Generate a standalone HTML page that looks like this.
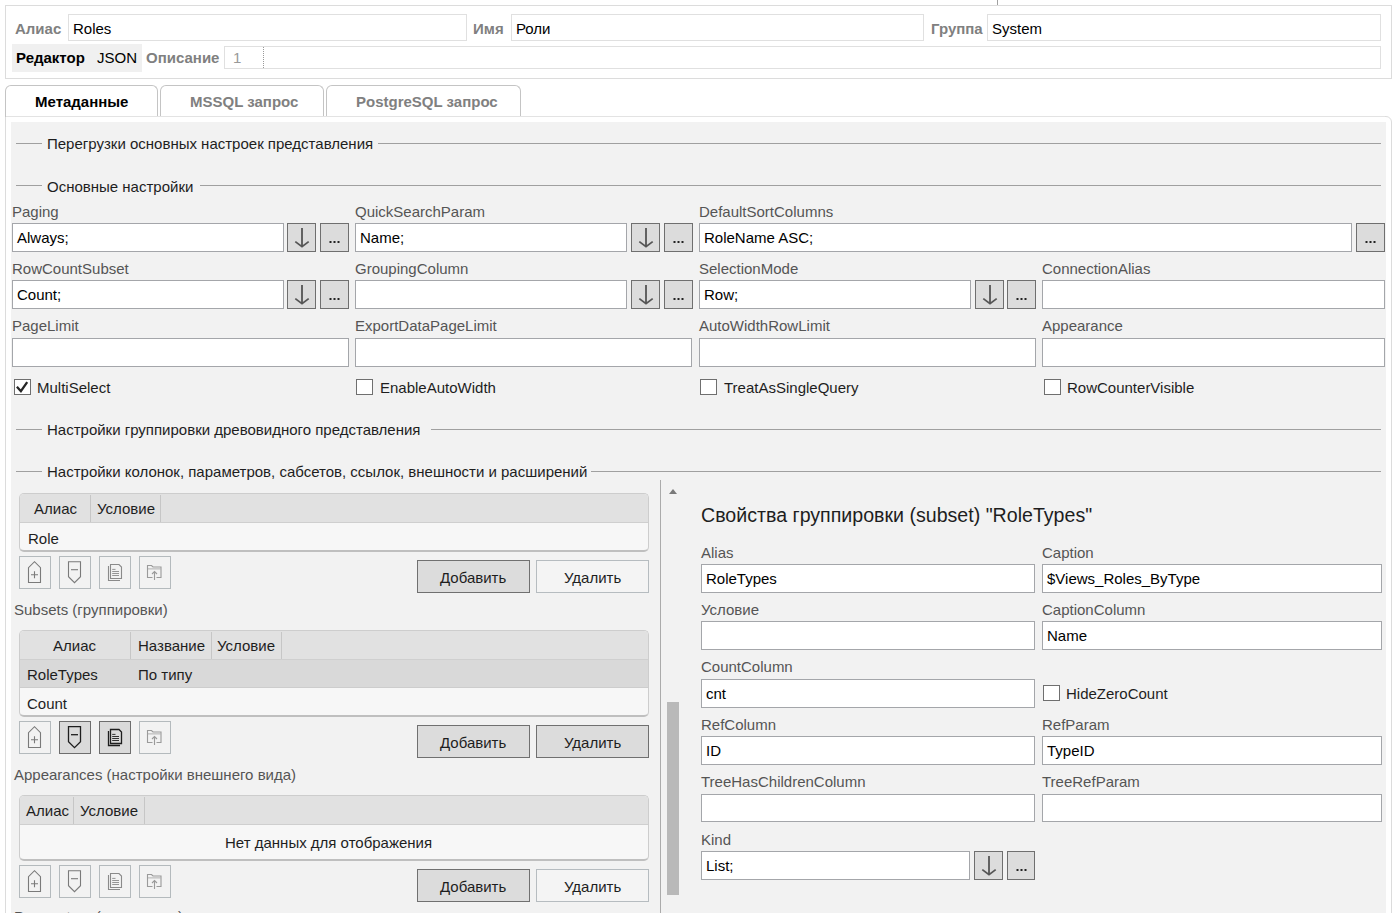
<!DOCTYPE html><html><head><meta charset="utf-8"><style>
html,body{margin:0;padding:0}
body{width:1392px;height:913px;position:relative;overflow:hidden;background:#fff;font-family:"Liberation Sans",sans-serif}
.t{position:absolute;white-space:nowrap}
.r{position:absolute;box-sizing:border-box}
svg.r{overflow:visible}
</style></head><body>
<div class="r" style="left:997px;top:0px;width:1px;height:6px;background:#a0a0a0;"></div>
<div class="r" style="left:5px;top:5px;width:1387px;height:74px;background:#fff;border:1px solid #dcdcdc;"></div>
<div class="t" style="left:15px;top:21px;font-size:15px;line-height:15px;color:#808080;font-weight:bold;">Алиас</div>
<div class="r" style="left:68px;top:14px;width:399px;height:27px;background:#fff;border:1px solid #e0e0e0;"></div>
<div class="t" style="left:73px;top:21px;font-size:15px;line-height:15px;color:#000;">Roles</div>
<div class="t" style="left:473px;top:21px;font-size:15px;line-height:15px;color:#808080;font-weight:bold;">Имя</div>
<div class="r" style="left:511px;top:14px;width:413px;height:27px;background:#fff;border:1px solid #e0e0e0;"></div>
<div class="t" style="left:516px;top:21px;font-size:15px;line-height:15px;color:#000;">Роли</div>
<div class="t" style="left:931px;top:21px;font-size:15px;line-height:15px;color:#808080;font-weight:bold;">Группа</div>
<div class="r" style="left:987px;top:14px;width:394px;height:27px;background:#fff;border:1px solid #e0e0e0;"></div>
<div class="t" style="left:992px;top:21px;font-size:15px;line-height:15px;color:#000;">System</div>
<div class="r" style="left:12px;top:44px;width:130px;height:28px;background:#f0f0f0;"></div>
<div class="t" style="left:16px;top:50px;font-size:15px;line-height:15px;color:#000;font-weight:bold;">Редактор</div>
<div class="t" style="left:97px;top:50px;font-size:15px;line-height:15px;color:#000;">JSON</div>
<div class="t" style="left:146px;top:50px;font-size:15px;line-height:15px;color:#808080;font-weight:bold;">Описание</div>
<div class="r" style="left:224px;top:46px;width:1157px;height:23px;background:#fff;border:1px solid #e0e0e0;"></div>
<div class="t" style="left:233px;top:50px;font-size:15px;line-height:15px;color:#999;">1</div>
<div class="r" style="left:263px;top:47px;width:1px;height:21px;border-left:1px dotted #999"></div>
<div class="r" style="left:5px;top:116px;width:1387px;height:885px;background:#fff;border:1px solid #dcdcdc;border-radius:0 6px 0 0;"></div>
<div class="r" style="left:5px;top:85px;width:153px;height:32px;background:#fff;border:1px solid #c4c4c4;border-radius:6px 6px 0 0;border-bottom:none;"></div>
<div class="r" style="left:160px;top:85px;width:164px;height:32px;background:#fff;border:1px solid #c4c4c4;border-radius:6px 6px 0 0;border-bottom:none;"></div>
<div class="r" style="left:326px;top:85px;width:195px;height:32px;background:#fff;border:1px solid #c4c4c4;border-radius:6px 6px 0 0;border-bottom:none;"></div>
<div class="r" style="left:6px;top:116px;width:1379px;height:1px;background:#e3e3e3;"></div>
<div class="t" style="left:35px;top:94px;font-size:15px;line-height:15px;color:#000;font-weight:bold;">Метаданные</div>
<div class="t" style="left:190px;top:94px;font-size:15px;line-height:15px;color:#808080;font-weight:bold;">MSSQL запрос</div>
<div class="t" style="left:356px;top:94px;font-size:15px;line-height:15px;color:#808080;font-weight:bold;">PostgreSQL запрос</div>
<div class="r" style="left:11px;top:122px;width:1375px;height:792px;background:#f2f2f2;"></div>
<div class="r" style="left:16px;top:143px;width:26px;height:1px;background:#a0a0a0;"></div>
<div class="t" style="left:47px;top:136px;font-size:15px;line-height:15px;color:#1e1e1e;">Перегрузки основных настроек представления</div>
<div class="r" style="left:378px;top:143px;width:1003px;height:1px;background:#a0a0a0;"></div>
<div class="r" style="left:16px;top:185px;width:26px;height:1px;background:#a0a0a0;"></div>
<div class="t" style="left:47px;top:179px;font-size:15px;line-height:15px;color:#1e1e1e;">Основные настройки</div>
<div class="r" style="left:200px;top:185px;width:1181px;height:1px;background:#a0a0a0;"></div>
<div class="t" style="left:12px;top:204px;font-size:15px;line-height:15px;color:#555;">Paging</div>
<div class="r" style="left:12px;top:223px;width:272px;height:29px;background:#fff;border:1px solid #a4a6aa;"></div>
<div class="t" style="left:17px;top:230px;font-size:15px;line-height:15px;color:#000;">Always;</div>
<div class="r" style="left:287px;top:223px;width:29px;height:29px;background:#dcdcdc;border:1px solid #6f6f6f;"></div>
<svg class="r" style="left:287px;top:223px" width="29" height="29"><path d="M15 5 V23.5 M8.3 18.6 L15 23.6 L21.7 18.6" stroke="#555" stroke-width="1.8" fill="none"/></svg>
<div class="r" style="left:320px;top:223px;width:29px;height:29px;background:#dcdcdc;border:1px solid #6f6f6f;"></div>
<svg class="r" style="left:320px;top:223px" width="29" height="29"><rect x="9.5" y="18" width="2" height="2" fill="#222"/><rect x="13.5" y="18" width="2" height="2" fill="#222"/><rect x="17.5" y="18" width="2" height="2" fill="#222"/></svg>
<div class="t" style="left:355px;top:204px;font-size:15px;line-height:15px;color:#555;">QuickSearchParam</div>
<div class="r" style="left:355px;top:223px;width:272px;height:29px;background:#fff;border:1px solid #a4a6aa;"></div>
<div class="t" style="left:360px;top:230px;font-size:15px;line-height:15px;color:#000;">Name;</div>
<div class="r" style="left:631px;top:223px;width:29px;height:29px;background:#dcdcdc;border:1px solid #6f6f6f;"></div>
<svg class="r" style="left:631px;top:223px" width="29" height="29"><path d="M15 5 V23.5 M8.3 18.6 L15 23.6 L21.7 18.6" stroke="#555" stroke-width="1.8" fill="none"/></svg>
<div class="r" style="left:664px;top:223px;width:29px;height:29px;background:#dcdcdc;border:1px solid #6f6f6f;"></div>
<svg class="r" style="left:664px;top:223px" width="29" height="29"><rect x="9.5" y="18" width="2" height="2" fill="#222"/><rect x="13.5" y="18" width="2" height="2" fill="#222"/><rect x="17.5" y="18" width="2" height="2" fill="#222"/></svg>
<div class="t" style="left:699px;top:204px;font-size:15px;line-height:15px;color:#555;">DefaultSortColumns</div>
<div class="r" style="left:699px;top:223px;width:653px;height:29px;background:#fff;border:1px solid #a4a6aa;"></div>
<div class="t" style="left:704px;top:230px;font-size:15px;line-height:15px;color:#000;">RoleName ASC;</div>
<div class="r" style="left:1356px;top:223px;width:29px;height:29px;background:#dcdcdc;border:1px solid #6f6f6f;"></div>
<svg class="r" style="left:1356px;top:223px" width="29" height="29"><rect x="9.5" y="18" width="2" height="2" fill="#222"/><rect x="13.5" y="18" width="2" height="2" fill="#222"/><rect x="17.5" y="18" width="2" height="2" fill="#222"/></svg>
<div class="t" style="left:12px;top:261px;font-size:15px;line-height:15px;color:#555;">RowCountSubset</div>
<div class="r" style="left:12px;top:280px;width:272px;height:29px;background:#fff;border:1px solid #a4a6aa;"></div>
<div class="t" style="left:17px;top:287px;font-size:15px;line-height:15px;color:#000;">Count;</div>
<div class="r" style="left:287px;top:280px;width:29px;height:29px;background:#dcdcdc;border:1px solid #6f6f6f;"></div>
<svg class="r" style="left:287px;top:280px" width="29" height="29"><path d="M15 5 V23.5 M8.3 18.6 L15 23.6 L21.7 18.6" stroke="#555" stroke-width="1.8" fill="none"/></svg>
<div class="r" style="left:320px;top:280px;width:29px;height:29px;background:#dcdcdc;border:1px solid #6f6f6f;"></div>
<svg class="r" style="left:320px;top:280px" width="29" height="29"><rect x="9.5" y="18" width="2" height="2" fill="#222"/><rect x="13.5" y="18" width="2" height="2" fill="#222"/><rect x="17.5" y="18" width="2" height="2" fill="#222"/></svg>
<div class="t" style="left:355px;top:261px;font-size:15px;line-height:15px;color:#555;">GroupingColumn</div>
<div class="r" style="left:355px;top:280px;width:272px;height:29px;background:#fff;border:1px solid #a4a6aa;"></div>
<div class="r" style="left:631px;top:280px;width:29px;height:29px;background:#dcdcdc;border:1px solid #6f6f6f;"></div>
<svg class="r" style="left:631px;top:280px" width="29" height="29"><path d="M15 5 V23.5 M8.3 18.6 L15 23.6 L21.7 18.6" stroke="#555" stroke-width="1.8" fill="none"/></svg>
<div class="r" style="left:664px;top:280px;width:29px;height:29px;background:#dcdcdc;border:1px solid #6f6f6f;"></div>
<svg class="r" style="left:664px;top:280px" width="29" height="29"><rect x="9.5" y="18" width="2" height="2" fill="#222"/><rect x="13.5" y="18" width="2" height="2" fill="#222"/><rect x="17.5" y="18" width="2" height="2" fill="#222"/></svg>
<div class="t" style="left:699px;top:261px;font-size:15px;line-height:15px;color:#555;">SelectionMode</div>
<div class="r" style="left:699px;top:280px;width:272px;height:29px;background:#fff;border:1px solid #a4a6aa;"></div>
<div class="t" style="left:704px;top:287px;font-size:15px;line-height:15px;color:#000;">Row;</div>
<div class="r" style="left:975px;top:280px;width:29px;height:29px;background:#dcdcdc;border:1px solid #6f6f6f;"></div>
<svg class="r" style="left:975px;top:280px" width="29" height="29"><path d="M15 5 V23.5 M8.3 18.6 L15 23.6 L21.7 18.6" stroke="#555" stroke-width="1.8" fill="none"/></svg>
<div class="r" style="left:1007px;top:280px;width:29px;height:29px;background:#dcdcdc;border:1px solid #6f6f6f;"></div>
<svg class="r" style="left:1007px;top:280px" width="29" height="29"><rect x="9.5" y="18" width="2" height="2" fill="#222"/><rect x="13.5" y="18" width="2" height="2" fill="#222"/><rect x="17.5" y="18" width="2" height="2" fill="#222"/></svg>
<div class="t" style="left:1042px;top:261px;font-size:15px;line-height:15px;color:#555;">ConnectionAlias</div>
<div class="r" style="left:1042px;top:280px;width:343px;height:29px;background:#fff;border:1px solid #a4a6aa;"></div>
<div class="t" style="left:12px;top:318px;font-size:15px;line-height:15px;color:#555;">PageLimit</div>
<div class="r" style="left:12px;top:338px;width:337px;height:29px;background:#fff;border:1px solid #a4a6aa;"></div>
<div class="t" style="left:355px;top:318px;font-size:15px;line-height:15px;color:#555;">ExportDataPageLimit</div>
<div class="r" style="left:355px;top:338px;width:337px;height:29px;background:#fff;border:1px solid #a4a6aa;"></div>
<div class="t" style="left:699px;top:318px;font-size:15px;line-height:15px;color:#555;">AutoWidthRowLimit</div>
<div class="r" style="left:699px;top:338px;width:337px;height:29px;background:#fff;border:1px solid #a4a6aa;"></div>
<div class="t" style="left:1042px;top:318px;font-size:15px;line-height:15px;color:#555;">Appearance</div>
<div class="r" style="left:1042px;top:338px;width:343px;height:29px;background:#fff;border:1px solid #a4a6aa;"></div>
<div class="r" style="left:14px;top:379px;width:17px;height:16px;background:#fff;border:1px solid #6f6f6f;"></div>
<svg class="r" style="left:14px;top:379px" width="17" height="17"><path d="M2.9 7.7 L6.9 12.2 L13.2 3.1" stroke="#262626" stroke-width="2.3" fill="none"/></svg>
<div class="t" style="left:37px;top:380px;font-size:15px;line-height:15px;color:#1e1e1e;">MultiSelect</div>
<div class="r" style="left:356px;top:379px;width:17px;height:16px;background:#fff;border:1px solid #6f6f6f;"></div>
<div class="t" style="left:380px;top:380px;font-size:15px;line-height:15px;color:#1e1e1e;">EnableAutoWidth</div>
<div class="r" style="left:700px;top:379px;width:17px;height:16px;background:#fff;border:1px solid #6f6f6f;"></div>
<div class="t" style="left:724px;top:380px;font-size:15px;line-height:15px;color:#1e1e1e;">TreatAsSingleQuery</div>
<div class="r" style="left:1044px;top:379px;width:17px;height:16px;background:#fff;border:1px solid #6f6f6f;"></div>
<div class="t" style="left:1067px;top:380px;font-size:15px;line-height:15px;color:#1e1e1e;">RowCounterVisible</div>
<div class="r" style="left:16px;top:429px;width:26px;height:1px;background:#a0a0a0;"></div>
<div class="t" style="left:47px;top:422px;font-size:15px;line-height:15px;color:#1e1e1e;">Настройки группировки древовидного представления</div>
<div class="r" style="left:431px;top:429px;width:950px;height:1px;background:#a0a0a0;"></div>
<div class="r" style="left:16px;top:471px;width:26px;height:1px;background:#a0a0a0;"></div>
<div class="t" style="left:47px;top:464px;font-size:15px;line-height:15px;color:#1e1e1e;">Настройки колонок, параметров, сабсетов, ссылок, внешности и расширений</div>
<div class="r" style="left:591px;top:471px;width:790px;height:1px;background:#a0a0a0;"></div>
<div class="r" style="left:19px;top:493px;width:630px;height:59px;background:#f7f7f7;border:1px solid #cdcdcd;border-radius:5px;border-bottom:2px solid #bfbfbf;"></div>
<div class="r" style="left:20px;top:494px;width:628px;height:29px;background:#e1e1e1;border-radius:4px 4px 0 0;"></div>
<div class="r" style="left:20px;top:522px;width:628px;height:1px;background:#cfcfcf;"></div>
<div class="r" style="left:90px;top:495px;width:1px;height:27px;background:#c6c6c6;"></div>
<div class="r" style="left:160px;top:495px;width:1px;height:27px;background:#c6c6c6;"></div>
<div class="t" style="left:34px;top:501px;font-size:15px;line-height:15px;color:#1e1e1e;">Алиас</div>
<div class="t" style="left:97px;top:501px;font-size:15px;line-height:15px;color:#1e1e1e;">Условие</div>
<div class="t" style="left:28px;top:531px;font-size:15px;line-height:15px;color:#1e1e1e;">Role</div>
<div class="r" style="left:19px;top:556px;width:32px;height:33px;background:transparent;border:1px solid #b4babd;"></div>
<svg class="r" style="left:19px;top:556px" width="32" height="33"><path d="M9.5 26.5 V11.7 L15.5 5.7 L21.5 11.7 V26.5 Z" stroke="#7a7a7a" stroke-width="1.1" fill="none"/><path d="M15.5 15.2 V22.2 M12 18.7 H19" stroke="#7a7a7a" stroke-width="1.1"/></svg>
<div class="r" style="left:59px;top:556px;width:32px;height:33px;background:transparent;border:1px solid #b4babd;"></div>
<svg class="r" style="left:59px;top:556px" width="32" height="33"><path d="M9.5 5.7 H21.5 V20.7 L15.5 26.7 L9.5 20.7 Z" stroke="#7a7a7a" stroke-width="1.1" fill="none"/><path d="M12 13.7 H19" stroke="#7a7a7a" stroke-width="1.1"/></svg>
<div class="r" style="left:99px;top:556px;width:32px;height:33px;background:transparent;border:1px solid #b4babd;"></div>
<svg class="r" style="left:99px;top:556px" width="32" height="33"><path d="M9.5 10 V24.5 H21" stroke="#8a8a8a" stroke-width="1.1" fill="none"/><path d="M11.5 8.5 H20 L22.5 11 V22.5 H11.5 Z" stroke="#8a8a8a" stroke-width="1.1" fill="none"/><path d="M13.2 13.4 H16.5 M13.2 15.5 H20 M13.2 17.5 H20 M13.2 19.5 H20" stroke="#8a8a8a" stroke-width="0.9"/></svg>
<div class="r" style="left:139px;top:556px;width:32px;height:33px;background:transparent;border:1px solid #b4babd;"></div>
<svg class="r" style="left:139px;top:556px" width="32" height="33"><path d="M13.5 21.5 H8.5 V9.5 H12.5 L14 11 H22 V21.5 H17.5" stroke="#9a9a9a" stroke-width="1.1" fill="none"/><rect x="9" y="12" width="12.5" height="1.6" fill="#9a9a9a" opacity="0.45"/><path d="M15.5 24 V15.5 M13 18 L15.5 15.5 L18 18" stroke="#9a9a9a" stroke-width="1.1" fill="none"/></svg>
<div class="r" style="left:417px;top:560px;width:113px;height:33px;background:#dcdcdc;border:1px solid #707070;"></div>
<div class="t" style="left:440px;top:570px;font-size:15px;line-height:15px;color:#1e1e1e;">Добавить</div>
<div class="r" style="left:536px;top:560px;width:113px;height:33px;background:#f4f4f4;border:1px solid #b6bcc0;"></div>
<div class="t" style="left:564px;top:570px;font-size:15px;line-height:15px;color:#1e1e1e;">Удалить</div>
<div class="t" style="left:14px;top:602px;font-size:15px;line-height:15px;color:#555;">Subsets (группировки)</div>
<div class="r" style="left:19px;top:630px;width:630px;height:87px;background:#f7f7f7;border:1px solid #cdcdcd;border-radius:5px;border-bottom:2px solid #bfbfbf;"></div>
<div class="r" style="left:20px;top:631px;width:628px;height:29px;background:#e1e1e1;border-radius:4px 4px 0 0;"></div>
<div class="r" style="left:20px;top:659px;width:628px;height:1px;background:#cfcfcf;"></div>
<div class="r" style="left:130px;top:632px;width:1px;height:27px;background:#c6c6c6;"></div>
<div class="r" style="left:211px;top:632px;width:1px;height:27px;background:#c6c6c6;"></div>
<div class="r" style="left:281px;top:632px;width:1px;height:27px;background:#c6c6c6;"></div>
<div class="t" style="left:53px;top:638px;font-size:15px;line-height:15px;color:#1e1e1e;">Алиас</div>
<div class="t" style="left:138px;top:638px;font-size:15px;line-height:15px;color:#1e1e1e;">Название</div>
<div class="t" style="left:217px;top:638px;font-size:15px;line-height:15px;color:#1e1e1e;">Условие</div>
<div class="r" style="left:20px;top:660px;width:628px;height:28px;background:#d9d9d9;"></div>
<div class="r" style="left:20px;top:687px;width:628px;height:1px;background:#cdcdcd;"></div>
<div class="t" style="left:27px;top:667px;font-size:15px;line-height:15px;color:#1e1e1e;">RoleTypes</div>
<div class="t" style="left:138px;top:667px;font-size:15px;line-height:15px;color:#1e1e1e;">По типу</div>
<div class="t" style="left:27px;top:696px;font-size:15px;line-height:15px;color:#1e1e1e;">Count</div>
<div class="r" style="left:19px;top:721px;width:32px;height:33px;background:transparent;border:1px solid #b4babd;"></div>
<svg class="r" style="left:19px;top:721px" width="32" height="33"><path d="M9.5 26.5 V11.7 L15.5 5.7 L21.5 11.7 V26.5 Z" stroke="#7a7a7a" stroke-width="1.1" fill="none"/><path d="M15.5 15.2 V22.2 M12 18.7 H19" stroke="#7a7a7a" stroke-width="1.1"/></svg>
<div class="r" style="left:59px;top:721px;width:32px;height:33px;background:#dadada;border:1px solid #6d6d6d;"></div>
<svg class="r" style="left:59px;top:721px" width="32" height="33"><path d="M9.5 5.7 H21.5 V20.7 L15.5 26.7 L9.5 20.7 Z" stroke="#1e1e1e" stroke-width="1.3" fill="none"/><path d="M12 13.7 H19" stroke="#1e1e1e" stroke-width="1.3"/></svg>
<div class="r" style="left:99px;top:721px;width:32px;height:33px;background:#dadada;border:1px solid #6d6d6d;"></div>
<svg class="r" style="left:99px;top:721px" width="32" height="33"><path d="M9.5 10 V24.5 H21" stroke="#1e1e1e" stroke-width="1.3" fill="none"/><path d="M11.5 8.5 H20 L22.5 11 V22.5 H11.5 Z" stroke="#1e1e1e" stroke-width="1.3" fill="none"/><path d="M13.2 13.4 H16.5 M13.2 15.5 H20 M13.2 17.5 H20 M13.2 19.5 H20" stroke="#1e1e1e" stroke-width="0.9"/></svg>
<div class="r" style="left:139px;top:721px;width:32px;height:33px;background:transparent;border:1px solid #b4babd;"></div>
<svg class="r" style="left:139px;top:721px" width="32" height="33"><path d="M13.5 21.5 H8.5 V9.5 H12.5 L14 11 H22 V21.5 H17.5" stroke="#9a9a9a" stroke-width="1.1" fill="none"/><rect x="9" y="12" width="12.5" height="1.6" fill="#9a9a9a" opacity="0.45"/><path d="M15.5 24 V15.5 M13 18 L15.5 15.5 L18 18" stroke="#9a9a9a" stroke-width="1.1" fill="none"/></svg>
<div class="r" style="left:417px;top:725px;width:113px;height:33px;background:#dcdcdc;border:1px solid #707070;"></div>
<div class="t" style="left:440px;top:735px;font-size:15px;line-height:15px;color:#1e1e1e;">Добавить</div>
<div class="r" style="left:536px;top:725px;width:113px;height:33px;background:#dcdcdc;border:1px solid #707070;"></div>
<div class="t" style="left:564px;top:735px;font-size:15px;line-height:15px;color:#1e1e1e;">Удалить</div>
<div class="t" style="left:14px;top:767px;font-size:15px;line-height:15px;color:#555;">Appearances (настройки внешнего вида)</div>
<div class="r" style="left:19px;top:795px;width:630px;height:66px;background:#f7f7f7;border:1px solid #cdcdcd;border-radius:5px;border-bottom:2px solid #bfbfbf;"></div>
<div class="r" style="left:20px;top:796px;width:628px;height:29px;background:#e1e1e1;border-radius:4px 4px 0 0;"></div>
<div class="r" style="left:20px;top:824px;width:628px;height:1px;background:#cfcfcf;"></div>
<div class="r" style="left:73px;top:797px;width:1px;height:27px;background:#c6c6c6;"></div>
<div class="r" style="left:144px;top:797px;width:1px;height:27px;background:#c6c6c6;"></div>
<div class="t" style="left:26px;top:803px;font-size:15px;line-height:15px;color:#1e1e1e;">Алиас</div>
<div class="t" style="left:80px;top:803px;font-size:15px;line-height:15px;color:#1e1e1e;">Условие</div>
<div class="t" style="left:225px;top:835px;font-size:15px;line-height:15px;color:#1e1e1e;">Нет данных для отображения</div>
<div class="r" style="left:19px;top:865px;width:32px;height:33px;background:transparent;border:1px solid #b4babd;"></div>
<svg class="r" style="left:19px;top:865px" width="32" height="33"><path d="M9.5 26.5 V11.7 L15.5 5.7 L21.5 11.7 V26.5 Z" stroke="#7a7a7a" stroke-width="1.1" fill="none"/><path d="M15.5 15.2 V22.2 M12 18.7 H19" stroke="#7a7a7a" stroke-width="1.1"/></svg>
<div class="r" style="left:59px;top:865px;width:32px;height:33px;background:transparent;border:1px solid #b4babd;"></div>
<svg class="r" style="left:59px;top:865px" width="32" height="33"><path d="M9.5 5.7 H21.5 V20.7 L15.5 26.7 L9.5 20.7 Z" stroke="#7a7a7a" stroke-width="1.1" fill="none"/><path d="M12 13.7 H19" stroke="#7a7a7a" stroke-width="1.1"/></svg>
<div class="r" style="left:99px;top:865px;width:32px;height:33px;background:transparent;border:1px solid #b4babd;"></div>
<svg class="r" style="left:99px;top:865px" width="32" height="33"><path d="M9.5 10 V24.5 H21" stroke="#8a8a8a" stroke-width="1.1" fill="none"/><path d="M11.5 8.5 H20 L22.5 11 V22.5 H11.5 Z" stroke="#8a8a8a" stroke-width="1.1" fill="none"/><path d="M13.2 13.4 H16.5 M13.2 15.5 H20 M13.2 17.5 H20 M13.2 19.5 H20" stroke="#8a8a8a" stroke-width="0.9"/></svg>
<div class="r" style="left:139px;top:865px;width:32px;height:33px;background:transparent;border:1px solid #b4babd;"></div>
<svg class="r" style="left:139px;top:865px" width="32" height="33"><path d="M13.5 21.5 H8.5 V9.5 H12.5 L14 11 H22 V21.5 H17.5" stroke="#9a9a9a" stroke-width="1.1" fill="none"/><rect x="9" y="12" width="12.5" height="1.6" fill="#9a9a9a" opacity="0.45"/><path d="M15.5 24 V15.5 M13 18 L15.5 15.5 L18 18" stroke="#9a9a9a" stroke-width="1.1" fill="none"/></svg>
<div class="r" style="left:417px;top:869px;width:113px;height:33px;background:#dcdcdc;border:1px solid #707070;"></div>
<div class="t" style="left:440px;top:879px;font-size:15px;line-height:15px;color:#1e1e1e;">Добавить</div>
<div class="r" style="left:536px;top:869px;width:113px;height:33px;background:#f4f4f4;border:1px solid #b6bcc0;"></div>
<div class="t" style="left:564px;top:879px;font-size:15px;line-height:15px;color:#1e1e1e;">Удалить</div>
<div class="t" style="left:14px;top:909px;font-size:15px;line-height:15px;color:#555;">Parameters (параметры)</div>
<div class="r" style="left:660px;top:480px;width:1px;height:434px;background:#ababab;"></div>
<svg class="r" style="left:668px;top:488px" width="10" height="7"><path d="M1 6 L5 1 L9 6 Z" fill="#7a7a7a"/></svg>
<div class="r" style="left:667px;top:702px;width:12px;height:193px;background:#b9b9b9;"></div>
<div class="t" style="left:701px;top:506px;font-size:19.6px;line-height:19.6px;color:#1e1e1e;">Свойства группировки (subset) "RoleTypes"</div>
<div class="t" style="left:701px;top:545px;font-size:15px;line-height:15px;color:#555;">Alias</div>
<div class="r" style="left:701px;top:564px;width:334px;height:29px;background:#fff;border:1px solid #a4a6aa;"></div>
<div class="t" style="left:706px;top:571px;font-size:15px;line-height:15px;color:#000;">RoleTypes</div>
<div class="t" style="left:1042px;top:545px;font-size:15px;line-height:15px;color:#555;">Caption</div>
<div class="r" style="left:1042px;top:564px;width:340px;height:29px;background:#fff;border:1px solid #a4a6aa;"></div>
<div class="t" style="left:1047px;top:571px;font-size:15px;line-height:15px;color:#000;">$Views_Roles_ByType</div>
<div class="t" style="left:701px;top:602px;font-size:15px;line-height:15px;color:#555;">Условие</div>
<div class="r" style="left:701px;top:621px;width:334px;height:29px;background:#fff;border:1px solid #a4a6aa;"></div>
<div class="t" style="left:1042px;top:602px;font-size:15px;line-height:15px;color:#555;">CaptionColumn</div>
<div class="r" style="left:1042px;top:621px;width:340px;height:29px;background:#fff;border:1px solid #a4a6aa;"></div>
<div class="t" style="left:1047px;top:628px;font-size:15px;line-height:15px;color:#000;">Name</div>
<div class="t" style="left:701px;top:659px;font-size:15px;line-height:15px;color:#555;">CountColumn</div>
<div class="r" style="left:701px;top:679px;width:334px;height:29px;background:#fff;border:1px solid #a4a6aa;"></div>
<div class="t" style="left:706px;top:686px;font-size:15px;line-height:15px;color:#000;">cnt</div>
<div class="r" style="left:1043px;top:685px;width:17px;height:16px;background:#fff;border:1px solid #6f6f6f;"></div>
<div class="t" style="left:1066px;top:686px;font-size:15px;line-height:15px;color:#1e1e1e;">HideZeroCount</div>
<div class="t" style="left:701px;top:717px;font-size:15px;line-height:15px;color:#555;">RefColumn</div>
<div class="r" style="left:701px;top:736px;width:334px;height:29px;background:#fff;border:1px solid #a4a6aa;"></div>
<div class="t" style="left:706px;top:743px;font-size:15px;line-height:15px;color:#000;">ID</div>
<div class="t" style="left:1042px;top:717px;font-size:15px;line-height:15px;color:#555;">RefParam</div>
<div class="r" style="left:1042px;top:736px;width:340px;height:29px;background:#fff;border:1px solid #a4a6aa;"></div>
<div class="t" style="left:1047px;top:743px;font-size:15px;line-height:15px;color:#000;">TypeID</div>
<div class="t" style="left:701px;top:774px;font-size:15px;line-height:15px;color:#555;">TreeHasChildrenColumn</div>
<div class="r" style="left:701px;top:794px;width:334px;height:28px;background:#fff;border:1px solid #a4a6aa;"></div>
<div class="t" style="left:1042px;top:774px;font-size:15px;line-height:15px;color:#555;">TreeRefParam</div>
<div class="r" style="left:1042px;top:794px;width:340px;height:28px;background:#fff;border:1px solid #a4a6aa;"></div>
<div class="t" style="left:701px;top:832px;font-size:15px;line-height:15px;color:#555;">Kind</div>
<div class="r" style="left:701px;top:851px;width:269px;height:29px;background:#fff;border:1px solid #a4a6aa;"></div>
<div class="t" style="left:706px;top:858px;font-size:15px;line-height:15px;color:#000;">List;</div>
<div class="r" style="left:974px;top:851px;width:29px;height:29px;background:#dcdcdc;border:1px solid #6f6f6f;"></div>
<svg class="r" style="left:974px;top:851px" width="29" height="29"><path d="M15 5 V23.5 M8.3 18.6 L15 23.6 L21.7 18.6" stroke="#555" stroke-width="1.8" fill="none"/></svg>
<div class="r" style="left:1007px;top:851px;width:28px;height:29px;background:#dcdcdc;border:1px solid #6f6f6f;"></div>
<svg class="r" style="left:1007px;top:851px" width="29" height="29"><rect x="9.5" y="18" width="2" height="2" fill="#222"/><rect x="13.5" y="18" width="2" height="2" fill="#222"/><rect x="17.5" y="18" width="2" height="2" fill="#222"/></svg>
</body></html>
